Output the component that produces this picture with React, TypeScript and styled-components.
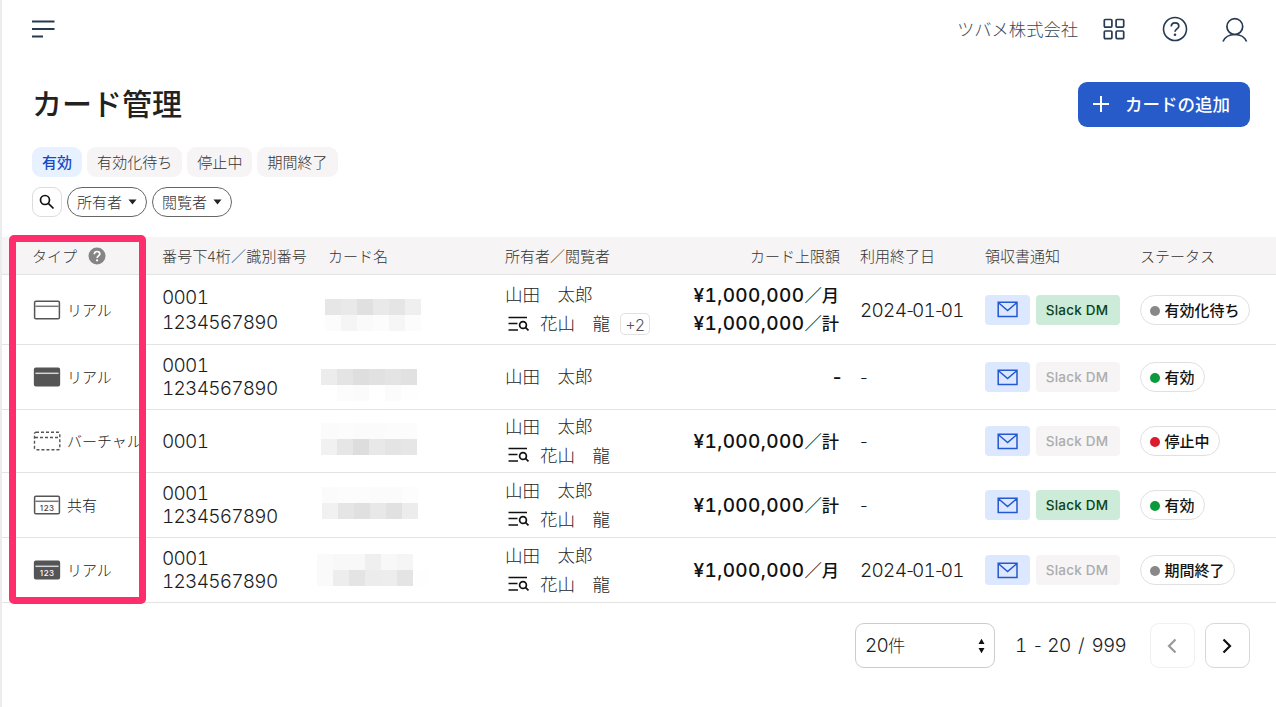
import React from 'react';
import styled, { createGlobalStyle } from 'styled-components';

const GlobalStyle = createGlobalStyle`
  *, *::before, *::after { box-sizing: border-box; }
  body {
    margin: 0;
    background: #fff;
    color: #1c1c1e;
    font-family: 'Noto Sans CJK JP', 'Noto Sans', sans-serif;
    font-weight: 300;
  }
  button { font: inherit; color: inherit; padding: 0; margin: 0; background: none; border: 0; }
`;

const Page = styled.div`
  position: relative;
  width: 1276px;
  height: 707px;
  overflow: hidden;
  border-left: 2px solid #ececee;
  background: #fff;
`;

const TopBar = styled.header`
  display: flex;
  align-items: center;
  height: 58px;
  padding: 0 27px 0 30px;
  color: #263a52;
`;

const Company = styled.span`
  margin-left: auto;
  margin-right: 24px;
  font-size: 17.3px;
  line-height: 24px;
  color: #3a4757;
`;

const TopIcon = styled.button<{ $gap?: number }>`
  display: flex;
  margin-left: ${(p) => p.$gap ?? 0}px;
`;

const TitleRow = styled.div`
  display: flex;
  justify-content: space-between;
  align-items: center;
  height: 44px;
  margin-top: 24px;
  padding: 0 26px 0 30px;
`;

const Title = styled.h1`
  margin: 0;
  padding-bottom: 3px;
  font-size: 30px;
  line-height: 41px;
  font-weight: 500;
  color: #222;
`;

const AddButton = styled.button`
  display: flex;
  align-items: center;
  gap: 16px;
  width: 172px;
  height: 45px;
  padding-left: 15px;
  border-radius: 9px;
  background: #265bc9;
  color: #fff;
  font-size: 17.5px;
  font-weight: 500;
`;

const ButtonLabel = styled.span`
  padding-bottom: 2px;
`;

const Filters = styled.div<{ $top: number }>`
  display: flex;
  gap: 5px;
  height: 30px;
  margin-top: ${(p) => p.$top}px;
  padding-left: 30px;
`;

const Chip = styled.button<{ $active?: boolean }>`
  height: 30px;
  padding: 0 10px 1px;
  border-radius: 9px;
  font-size: 15px;
  letter-spacing: 0.04px;
  line-height: 28px;
  background: ${(p) => (p.$active ? '#e8f1ff' : '#f6f4f5')};
  color: ${(p) => (p.$active ? '#1749c4' : '#333')};
  font-weight: ${(p) => (p.$active ? 500 : 300)};
`;

const SearchButton = styled.button`
  display: flex;
  align-items: center;
  justify-content: center;
  width: 30px;
  height: 30px;
  border: 1px solid #dcdcdc;
  border-radius: 9px;
  color: #111;
`;

const Dropdown = styled.button`
  display: flex;
  align-items: center;
  gap: 6px;
  width: 80px;
  height: 30px;
  padding-left: 9px;
  border: 1px solid #666;
  border-radius: 15px;
  font-size: 15px;
  line-height: 28px;
  color: #333;
`;

const Table = styled.div`
  margin-top: 20px;
`;

const Row = styled.div<{ $height: number }>`
  display: grid;
  grid-template-columns: 129px 155px 188px 160px 175px 145px 155px 1fr;
  align-items: center;
  height: ${(p) => p.$height}px;
  padding-left: 31px;
  border-bottom: 1px solid #e3e3e3;
`;

const HeadRow = styled(Row)`
  background: #f6f4f5;
  font-size: 15px;
  color: #333;
`;

const HeadCell = styled.div<{ $indent?: number; $right?: boolean; $track?: number }>`
  display: flex;
  align-items: center;
  gap: 11px;
  padding-left: ${(p) => p.$indent ?? 0}px;
  justify-content: ${(p) => (p.$right ? 'flex-end' : 'flex-start')};
  letter-spacing: ${(p) => p.$track ?? 0}px;
  line-height: 22px;
  white-space: nowrap;
`;

const TypeHead = styled(HeadCell)`
  margin-left: -1px;
`;

const TypeCell = styled.div`
  display: flex;
  align-items: center;
  gap: 6px;
  font-size: 15px;
  line-height: 22px;
  white-space: nowrap;
  color: #222;
`;

const Numbers = styled.div<{ $line: number }>`
  padding-top: 1px;
  font-family: Inter, 'Noto Sans CJK JP', sans-serif;
  font-feature-settings: 'tnum';
  font-size: 19px;
  letter-spacing: -0.75px;
  line-height: ${(p) => p.$line}px;
`;

const Mosaic = styled.div<{ $indent: number; $shift: number }>`
  display: grid;
  grid-template-columns: repeat(7, 16px);
  grid-auto-rows: 16px;
  margin: ${(p) => p.$shift}px 0 0 ${(p) => p.$indent}px;
`;

const Tile = styled.span<{ $tone: string }>`
  background: #${(p) => p.$tone}${(p) => p.$tone}${(p) => p.$tone};
`;

const People = styled.div`
  padding-bottom: 3px;
  font-size: 17.5px;
  line-height: 29px;
`;

const Viewer = styled.div`
  display: flex;
  align-items: center;
  white-space: nowrap;
  svg { margin: 2px 11px 0 3px; }
`;

const More = styled.span`
  margin: 2px 0 0 10px;
  width: 30px;
  height: 22px;
  border: 1px solid #dfe1e3;
  border-radius: 5px;
  font-family: Inter, sans-serif;
  font-size: 16px;
  line-height: 22px;
  text-align: center;
  color: #555;
`;

const Limit = styled.div<{ $empty: boolean }>`
  padding: 1px ${(p) => (p.$empty ? 0 : 1)}px 0 0;
  text-align: right;
  font-family: Inter, 'Noto Sans CJK JP', sans-serif;
  font-feature-settings: ${(p) => (p.$empty ? 'normal' : "'tnum'")};
  font-weight: 500;
  font-size: 19px;
  letter-spacing: ${(p) => (p.$empty ? -1.5 : 0.4)}px;
  line-height: 28px;
  white-space: nowrap;
  color: #111;
`;

const Unit = styled.span`
  font-size: 17.3px;
  letter-spacing: 0;
`;

const DateCell = styled.div`
  padding: 2px 0 0 20px;
  font-family: Inter, sans-serif;
  font-feature-settings: 'tnum';
  font-size: 19px;
  letter-spacing: -0.75px;
  line-height: 24px;
`;

const Hyphen = styled.span`
  font-feature-settings: normal;
  font-size: 17px;
  letter-spacing: -2px;
`;

const Notice = styled.div`
  display: flex;
  gap: 6px;
`;

const MailTag = styled.span`
  display: flex;
  align-items: center;
  justify-content: center;
  width: 45px;
  height: 30px;
  border-radius: 4px;
  background: #dce8ff;
`;

const SlackTag = styled.span<{ $on: boolean }>`
  width: 84px;
  height: 30px;
  padding-right: 2px;
  border-radius: 4px;
  text-align: center;
  font-family: Inter, sans-serif;
  font-weight: 500;
  font-size: 13.5px;
  letter-spacing: 0.2px;
  line-height: 31px;
  background: ${(p) => (p.$on ? '#ccebd8' : '#f6f4f5')};
  color: ${(p) => (p.$on ? '#0c4220' : '#acacac')};
`;

const Status = styled.span`
  display: inline-flex;
  align-items: center;
  justify-self: start;
  gap: 5px;
  height: 30px;
  padding: 0 9px 0 8.5px;
  border: 1px solid #e0e0e0;
  border-radius: 15px;
  font-size: 15px;
  line-height: 28px;
  font-weight: 500;
  color: #111;
`;

const Dot = styled.i<{ $color: string }>`
  width: 10px;
  height: 10px;
  margin-top: 2px;
  border-radius: 50%;
  background: ${(p) => p.$color};
`;

const Pager = styled.div`
  display: flex;
  justify-content: flex-end;
  align-items: center;
  margin-top: 20px;
  padding-right: 26px;
  font-family: Inter, 'Noto Sans CJK JP', sans-serif;
  font-feature-settings: 'tnum';
  font-size: 19px;
  letter-spacing: -0.75px;
`;

const PageSize = styled.div`
  display: flex;
  align-items: center;
  justify-content: space-between;
  width: 140px;
  height: 45px;
  padding: 0 8px 0 9px;
  border: 1px solid #ccc;
  border-radius: 9px;
  line-height: 22px;
`;

const Range = styled.span`
  width: 115px;
  margin: 0 20px 0 20px;
  white-space: nowrap;
  word-spacing: 3.2px;
`;

const PageButton = styled.button<{ $disabled?: boolean }>`
  display: flex;
  align-items: center;
  justify-content: center;
  width: 45px;
  height: 45px;
  margin-left: ${(p) => (p.$disabled ? 0 : 10)}px;
  padding-right: 2px;
  border: 1px solid ${(p) => (p.$disabled ? '#f0f0f0' : '#d8d8d8')};
  border-radius: 9px;
  color: ${(p) => (p.$disabled ? '#999' : '#111')};
`;

const Highlight = styled.div`
  position: absolute;
  left: 7px;
  top: 235px;
  width: 137px;
  height: 369px;
  border: 7px solid #ff2d6b;
  border-radius: 5px;
`;

type CardKind = 'outline' | 'solid' | 'virtual' | 'outline123' | 'solid123';

function CardIcon({ kind }: { kind: CardKind }) {
  const digits = kind.endsWith('123');
  if (kind === 'virtual') {
    return (
      <svg width="28" height="20" viewBox="0 0 28 20" fill="none" stroke="#555" strokeWidth="1.4" strokeDasharray="3 2">
        <rect x="1.500" y="1.200" width="25.300" height="17.600" rx="1.500" />
        <path d="M2 6.500h24" />
      </svg>
    );
  }
  const solid = kind.startsWith('solid');
  return (
    <svg width="28" height="20" viewBox="0 0 28 20" fill="none">
      <rect x="1.600" y="1.200" width="24.800" height="17.600" rx="1.300" fill={solid ? '#555' : '#fff'} stroke="#555" strokeWidth="1.500" />
      <path d="M2.400 6.300h23.200" stroke={solid ? '#d5d5d5' : '#777'} strokeWidth="1.500" />
      {digits && (
        <text x="14.200" y="16" textAnchor="middle" fontFamily="Inter, sans-serif" fontSize="8" fontWeight="500" letterSpacing=".5" fill={solid ? '#fff' : '#444'}>
          123
        </text>
      )}
    </svg>
  );
}

const ViewerIcon = () => (
  <svg width="21" height="16" viewBox="0 0 21 16" fill="none" stroke="#111" strokeWidth="1.700">
    <path d="M.5 1.500h18.500M.5 7.500h9M.5 14h9.500" />
    <circle cx="15" cy="9" r="3.400" />
    <path d="M17.400 11.400l3.100 3.100" />
  </svg>
);

const MailIcon = () => (
  <svg width="21" height="17" viewBox="0 0 21 17" fill="none" stroke="#2457d0" strokeWidth="1.500">
    <path d="M1.200 1.200h18.800v14.300H1.200zM1.200 1.500l9.400 8 9.400-8" />
  </svg>
);

const Caret = () => (
  <svg width="9" height="6" viewBox="0 0 9 6" fill="#222">
    <path d="M.5.500h8L4.500 5.500z" />
  </svg>
);

interface CardRow {
  height: number;
  kind: CardKind;
  type: string;
  numbers: string[];
  numberLine: number;
  mosaic: { indent: number; shift: number; tones: string };
  viewer?: boolean;
  more?: string;
  limits: { amount: string; unit: string }[];
  date: string[];
  slack: boolean;
  status: string;
  color: string;
}

const GRAY = '#888';
const GREEN = '#0a9a3b';
const RED = '#dc1c2e';

const rows: CardRow[] = [
  {
    height: 70, kind: 'outline', type: 'リアル', numbers: ['0001', '1234567890'], numberLine: 25,
    mosaic: { indent: 8, shift: 10, tones: 'e6 e9 e0 e9 e5 ef ff fc f5 fa fc f6 fc ff' },
    viewer: true, more: '+2', limits: [{ amount: '¥1,000,000', unit: '／月' }, { amount: '¥1,000,000', unit: '／計' }],
    date: ['2024', '01', '01'], slack: true, status: '有効化待ち', color: GRAY,
  },
  {
    height: 65, kind: 'solid', type: 'リアル', numbers: ['0001', '1234567890'], numberLine: 22.5,
    mosaic: { indent: 4, shift: 15, tones: 'ec e4 de e1 e4 e1 ff ff fc fb ff fb fe ff' },
    limits: [], date: [], slack: false, status: '有効', color: GREEN,
  },
  {
    height: 63, kind: 'virtual', type: 'バーチャル', numbers: ['0001'], numberLine: 24,
    mosaic: { indent: 4, shift: -5, tones: 'fb fc fb fb fc fc ff f1 e6 dd e8 e4 e6 ff' },
    viewer: true, limits: [{ amount: '¥1,000,000', unit: '／計' }], date: [], slack: false, status: '停止中', color: RED,
  },
  {
    height: 65, kind: 'outline123', type: '共有', numbers: ['0001', '1234567890'], numberLine: 22.5,
    mosaic: { indent: 5, shift: -5, tones: 'fb fc fc fb fb fd ff f1 e5 e0 e8 e1 ec ff' },
    viewer: true, limits: [{ amount: '¥1,000,000', unit: '／計' }], date: [], slack: true, status: '有効', color: GREEN,
  },
  {
    height: 65, kind: 'solid123', type: 'リアル', numbers: ['0001', '1234567890'], numberLine: 22.5,
    mosaic: { indent: 0, shift: -1, tones: 'fa f8 f8 ef f8 f5 ff fa ed e4 ec ed e4 fe' },
    viewer: true, limits: [{ amount: '¥1,000,000', unit: '／月' }], date: ['2024', '01', '01'], slack: false, status: '期間終了', color: GRAY,
  },
];

function DateText({ parts }: { parts: string[] }) {
  if (parts.length === 0) {
    return <DateCell><Hyphen>-</Hyphen></DateCell>;
  }
  return (
    <DateCell>
      {parts.map((part, i) => (
        <React.Fragment key={i}>
          {i > 0 && <Hyphen>-</Hyphen>}
          {part}
        </React.Fragment>
      ))}
    </DateCell>
  );
}

function CardTableRow({ row }: { row: CardRow }) {
  return (
    <Row $height={row.height}>
      <TypeCell>
        <CardIcon kind={row.kind} />
        {row.type}
      </TypeCell>
      <Numbers $line={row.numberLine}>
        {row.numbers.map((n) => <div key={n}>{n}</div>)}
      </Numbers>
      <Mosaic $indent={row.mosaic.indent} $shift={row.mosaic.shift}>
        {row.mosaic.tones.split(' ').map((tone, i) => <Tile key={i} $tone={tone} />)}
      </Mosaic>
      <People>
        <div>山田　太郎</div>
        {row.viewer && (
          <Viewer>
            <ViewerIcon />
            花山　龍
            {row.more && <More>{row.more}</More>}
          </Viewer>
        )}
      </People>
      <Limit $empty={row.limits.length === 0}>
        {row.limits.length === 0 && '-'}
        {row.limits.map((l, i) => (
          <div key={i}>{l.amount}<Unit>{l.unit}</Unit></div>
        ))}
      </Limit>
      <DateText parts={row.date} />
      <Notice>
        <MailTag><MailIcon /></MailTag>
        <SlackTag $on={row.slack}>Slack DM</SlackTag>
      </Notice>
      <Status>
        <Dot $color={row.color} />
        {row.status}
      </Status>
    </Row>
  );
}

export default function App() {
  return (
    <Page>
      <GlobalStyle />
      <TopBar>
        <TopIcon>
          <svg width="24" height="20" viewBox="0 0 24 20" stroke="currentColor" strokeWidth="2">
            <path d="M0 2.500h22.500M0 10h22.500M0 17.500h11" />
          </svg>
        </TopIcon>
        <Company>ツバメ株式会社</Company>
        <TopIcon>
          <svg width="24" height="24" viewBox="0 0 24 24" fill="none" stroke="currentColor" strokeWidth="1.700">
            <rect x="2.300" y="2.500" width="7.600" height="7.600" rx="1" />
            <rect x="14.100" y="2.500" width="7.600" height="7.600" rx="1" />
            <rect x="2.300" y="14" width="7.600" height="7.600" rx="1" />
            <rect x="14.100" y="14" width="7.600" height="7.600" rx="1" />
          </svg>
        </TopIcon>
        <TopIcon $gap={36}>
          <svg width="26" height="26" viewBox="0 0 26 26" fill="none" stroke="currentColor" strokeWidth="1.600">
            <circle cx="13" cy="13" r="11.500" />
            <path d="M9.300 10.600c0-2.300 1.600-3.700 3.700-3.700s3.800 1.300 3.800 3.300c0 2.700-3.800 2.800-3.800 5.600" strokeWidth="1.700" />
            <circle cx="13" cy="18.700" r="1.300" fill="currentColor" stroke="none" />
          </svg>
        </TopIcon>
        <TopIcon $gap={33}>
          <svg width="28" height="26" viewBox="0 0 28 26" fill="none" stroke="currentColor" strokeWidth="1.700">
            <circle cx="13.800" cy="10.600" r="7.900" />
            <path d="M2 25.500C4 20.900 8.300 18.500 13.800 18.500s9.800 2.400 11.800 7" />
          </svg>
        </TopIcon>
      </TopBar>

      <TitleRow>
        <Title>カード管理</Title>
        <AddButton>
          <svg width="16" height="16" viewBox="0 0 16 16" stroke="#fff" strokeWidth="2"><path d="M8 0v16M0 8h16" /></svg>
          <ButtonLabel>カードの追加</ButtonLabel>
        </AddButton>
      </TitleRow>

      <Filters $top={21}>
        <Chip $active>有効</Chip>
        <Chip>有効化待ち</Chip>
        <Chip>停止中</Chip>
        <Chip>期間終了</Chip>
      </Filters>
      <Filters $top={10}>
        <SearchButton>
          <svg width="16" height="16" viewBox="0 0 16 16" fill="none" stroke="currentColor" strokeWidth="1.700">
            <circle cx="6" cy="6" r="4.500" /><path d="M9.300 9.300l5.200 5.200" />
          </svg>
        </SearchButton>
        <Dropdown>所有者<Caret /></Dropdown>
        <Dropdown>閲覧者<Caret /></Dropdown>
      </Filters>

      <Table>
        <HeadRow $height={38}>
          <TypeHead>
            タイプ
            <svg width="18" height="18" viewBox="0 0 18 18" fill="none">
              <circle cx="9" cy="9" r="8.500" fill="#858585" />
              <path d="M6.300 7.200c0-1.700 1.100-2.700 2.700-2.700s2.800.9 2.800 2.400c0 1.900-2.700 2-2.700 4.100" stroke="#fff" strokeWidth="1.700" />
              <circle cx="9.100" cy="13.300" r="1.100" fill="#fff" />
            </svg>
          </TypeHead>
          <HeadCell $track={0.2}>番号下4桁／識別番号</HeadCell>
          <HeadCell $indent={11}>カード名</HeadCell>
          <HeadCell>所有者／閲覧者</HeadCell>
          <HeadCell $right>カード上限額</HeadCell>
          <HeadCell $indent={20}>利用終了日</HeadCell>
          <HeadCell>領収書通知</HeadCell>
          <HeadCell>ステータス</HeadCell>
        </HeadRow>
        {rows.map((row, i) => <CardTableRow key={i} row={row} />)}
      </Table>

      <Pager>
        <PageSize>
          <span>20<Unit>件</Unit></span>
          <svg width="9" height="16" viewBox="0 0 9 16" fill="#111"><path d="M1.500 6L4.500.800 7.500 6zM1.500 10l3 5.200 3-5.200z" /></svg>
        </PageSize>
        <Range>1 <Hyphen>-</Hyphen> 20 / 999</Range>
        <PageButton $disabled>
          <svg width="10" height="16" viewBox="0 0 10 16" fill="none" stroke="currentColor" strokeWidth="2.200"><path d="M8.500 1.500L2 8l6.500 6.500" /></svg>
        </PageButton>
        <PageButton>
          <svg width="10" height="16" viewBox="0 0 10 16" fill="none" stroke="currentColor" strokeWidth="2.200"><path d="M1.500 1.500L8 8l-6.500 6.500" /></svg>
        </PageButton>
      </Pager>
      <Highlight />
    </Page>
  );
}
